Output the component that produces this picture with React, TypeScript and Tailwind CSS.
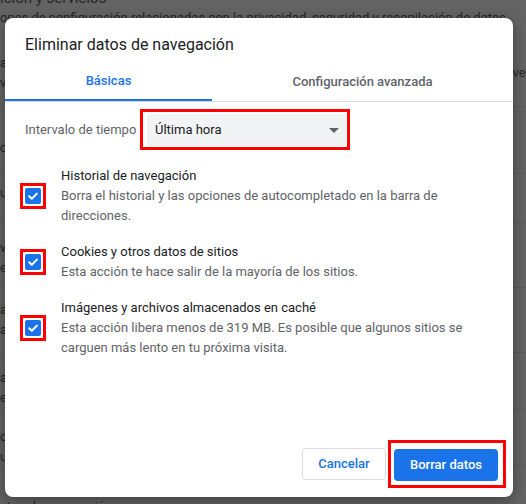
import { ReactNode } from "react";

// background rows of the settings page behind the modal (only edges are visible)
const bgRows = [
  { h: 79, pt: 25, lines: ["a", "v"], right: "ver" },
  { h: 67, pt: 31, lines: ["c"] },
  { h: 49, pt: 9, lines: ["u"] },
  { h: 65, pt: 15, lines: ["v", "e"] },
  { h: 65, pt: 12, lines: ["a", "a"] },
  { h: 57, pt: 15, lines: ["a", "e"] },
  { h: 56, pt: 17, lines: ["c", "u"] },
];

const RedMark = ({ children, className }: { children: ReactNode; className?: string }) => (
  <div className={"border-[3px] border-[#ff0000] " + (className ?? "")}>{children}</div>
);

const CheckBox = () => (
  <div className="h-4 w-4 rounded-[2px] bg-[#1a73e8] flex items-center justify-center">
    <svg width="16" height="16" viewBox="0 0 16 16" fill="none">
      <path d="M4.2 8.3 6.8 10.8 11.9 5.6" stroke="white" strokeWidth="2" strokeLinecap="round" strokeLinejoin="round" />
    </svg>
  </div>
);

const items = [
  {
    title: "Historial de navegación",
    desc: "Borra el historial y las opciones de autocompletado en la barra de direcciones.",
  },
  {
    title: "Cookies y otros datos de sitios",
    desc: "Esta acción te hace salir de la mayoría de los sitios.",
  },
  {
    title: "Imágenes y archivos almacenados en caché",
    desc: "Esta acción libera menos de 319 MB. Es posible que algunos sitios se carguen más lento en tu próxima visita.",
  },
];

export default function App() {
  return (
    <div className="relative h-[504px] w-[526px] overflow-hidden bg-[#636363] font-['Roboto',sans-serif]">
      {/* dimmed page */}
      <div className="text-[#262626] text-[13px] leading-5">
        <div className="-mt-[12px] h-5 text-[15px]">ición y servicios</div>
        <div className="h-5 whitespace-nowrap">
          ones de configuración relacionadas con la privacidad, seguridad y recopilación de datos
        </div>
        {bgRows.map((r, i) => (
          <div
            key={i}
            className="border-b border-[#5a5a5a] flex justify-between"
            style={{ height: r.h, paddingTop: r.pt }}
          >
            <div>
              {r.lines.map((l, j) => (
                <div key={j}>{l}</div>
              ))}
            </div>
            {r.right && <div className="mt-[10px] -mr-1">{r.right}</div>}
          </div>
        ))}
        <div className="mt-[31px] whitespace-nowrap">atos de navegación</div>
      </div>

      {/* modal */}
      <div className="absolute left-[5px] top-[18px] flex h-[479px] w-[508px] flex-col rounded-lg bg-white shadow-[0_4px_14px_rgba(0,0,0,0.35)]">
        <div className="h-[44px] pl-5 pt-[17px] text-[16px] leading-5 text-[#202124]">
          Eliminar datos de navegación
        </div>

        <div className="flex border-b border-[#dadce0] text-[13px] font-medium">
          <div className="flex h-[39px] w-[207px] items-center justify-center border-b-2 border-[#1a73e8] text-[#1a73e8]">
            Básicas
          </div>
          <div className="flex h-[39px] flex-1 items-center justify-center text-[#5f6368]">
            Configuración avanzada
          </div>
        </div>

        <div className="px-5 text-[13px] leading-5">
          <div className="mt-[7px] flex items-center">
            <span className="w-[115px] text-[#5f6368]">Intervalo de tiempo</span>
            <RedMark className="h-[41px] w-[210px] pl-[4px] pr-[1px] pt-[2px]">
              <div className="flex h-[32px] items-center justify-between rounded bg-[#f1f3f4] pl-2 pr-[7px] text-[#202124]">
                <span>Última hora</span>
                <svg width="10" height="5" viewBox="0 0 10 5">
                  <path d="M0 0h10L5 5z" fill="#5f6368" />
                </svg>
              </div>
            </RedMark>
          </div>

          {items.map((it) => (
            <div key={it.title} className="mt-4 flex items-center">
              <RedMark className="-ml-[5px] p-[2px]">
                <CheckBox />
              </RedMark>
              <div className="ml-[15px] flex-1">
                <div className="text-[#202124]">{it.title}</div>
                <div className="text-[#5f6368]">{it.desc}</div>
              </div>
            </div>
          ))}
        </div>

        <div className="mt-auto flex items-center justify-end pb-[9px] pr-[7px] text-[13px] font-medium">
          <button className="mr-[2px] h-8 w-[84px] rounded border border-[#dadce0] bg-white text-[#1a73e8]">
            Cancelar
          </button>
          <RedMark className="pb-[4px] pl-[3px] pr-[5px] pt-[6px]">
            <button className="h-8 w-[104px] rounded bg-[#1a73e8] text-white">Borrar datos</button>
          </RedMark>
        </div>
      </div>
    </div>
  );
}
